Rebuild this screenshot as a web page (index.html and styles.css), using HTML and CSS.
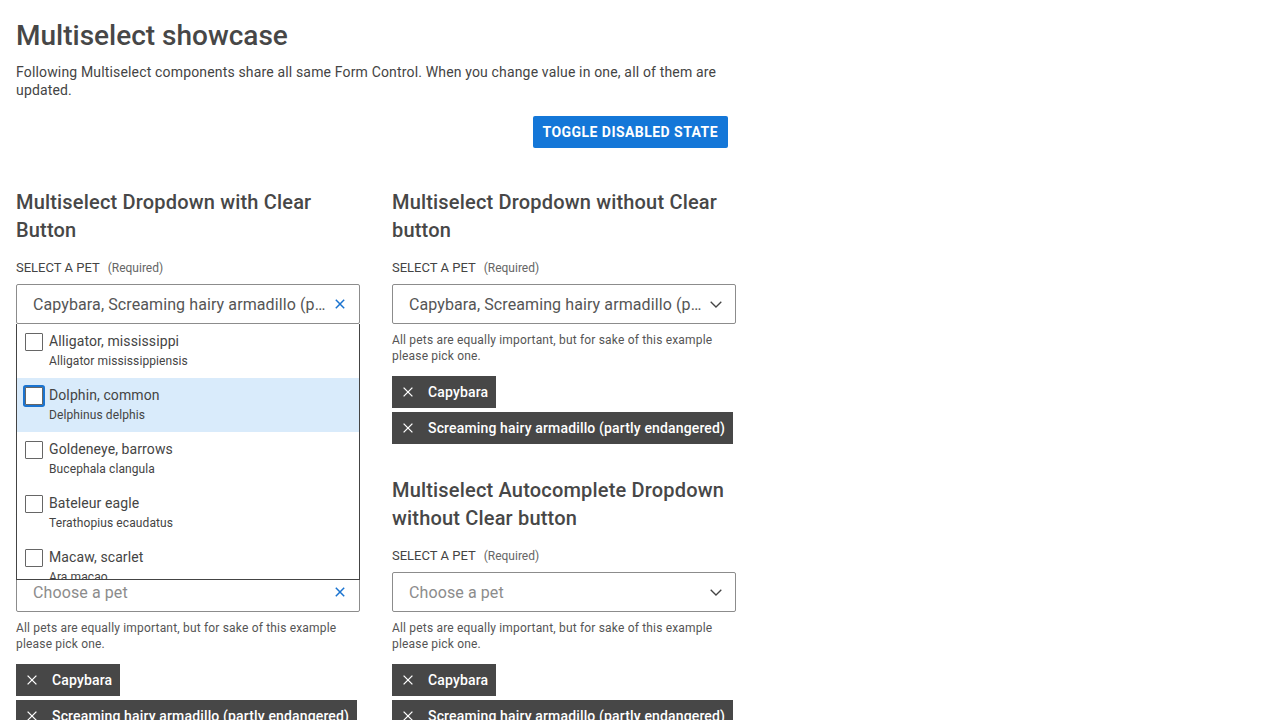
FILE: index.html
```html
<!DOCTYPE html>
<html lang="en">
<head>
<meta charset="utf-8">
<title>Multiselect showcase</title>
<link rel="stylesheet" href="styles.css">
</head>
<body>
<div class="page">
  <h1 class="title">Multiselect showcase</h1>
  <p class="intro">Following Multiselect components share all same Form Control. When you change value in one, all of them are updated.</p>
  <div class="actions"><button class="btn-primary">Toggle disabled state</button></div>

  <div class="columns">
    <div class="column">
      <section class="demo">
        <h2 class="demo-title">Multiselect Dropdown with Clear Button</h2>
        <div class="label">Select a pet <span class="req">(Required)</span></div>
        <div class="field-wrap">
          <div class="field">
            <span class="value">Capybara, Screaming hairy armadillo (partly endangered)</span>
            <span class="icon-clear"><svg width="10" height="10" viewBox="0 0 10 10"><path d="M0.8 0.8L9.2 9.2M9.2 0.8L0.8 9.2" stroke="#1a73d0" stroke-width="1.5" fill="none"/></svg></span>
          </div>
          <ul class="listbox">
            <li class="option"><span class="check"></span><span class="opt-text"><span class="opt-title">Alligator, mississippi</span><span class="opt-sub">Alligator mississippiensis</span></span></li>
            <li class="option active"><span class="check focus"></span><span class="opt-text"><span class="opt-title">Dolphin, common</span><span class="opt-sub">Delphinus delphis</span></span></li>
            <li class="option"><span class="check"></span><span class="opt-text"><span class="opt-title">Goldeneye, barrows</span><span class="opt-sub">Bucephala clangula</span></span></li>
            <li class="option"><span class="check"></span><span class="opt-text"><span class="opt-title">Bateleur eagle</span><span class="opt-sub">Terathopius ecaudatus</span></span></li>
            <li class="option"><span class="check"></span><span class="opt-text"><span class="opt-title">Macaw, scarlet</span><span class="opt-sub">Ara macao</span></span></li>
          </ul>
        </div>
        <p class="help">All pets are equally important, but for sake of this example please pick one.</p>
        <div class="chips">
          <span class="chip"><svg width="10" height="10" viewBox="0 0 10 10"><path d="M0.6 0.6L9.4 9.4M9.4 0.6L0.6 9.4" stroke="#fff" stroke-width="1.3" fill="none"/></svg>Capybara</span>
          <span class="chip"><svg width="10" height="10" viewBox="0 0 10 10"><path d="M0.6 0.6L9.4 9.4M9.4 0.6L0.6 9.4" stroke="#fff" stroke-width="1.3" fill="none"/></svg>Screaming hairy armadillo (partly endangered)</span>
        </div>
      </section>
      <section class="demo">
        <h2 class="demo-title">Multiselect Autocomplete Dropdown with Clear button</h2>
        <div class="label">Select a pet <span class="req">(Required)</span></div>
        <div class="field">
          <span class="value placeholder">Choose a pet</span>
          <span class="icon-clear"><svg width="10" height="10" viewBox="0 0 10 10"><path d="M0.8 0.8L9.2 9.2M9.2 0.8L0.8 9.2" stroke="#1a73d0" stroke-width="1.5" fill="none"/></svg></span>
        </div>
        <p class="help">All pets are equally important, but for sake of this example please pick one.</p>
        <div class="chips">
          <span class="chip"><svg width="10" height="10" viewBox="0 0 10 10"><path d="M0.6 0.6L9.4 9.4M9.4 0.6L0.6 9.4" stroke="#fff" stroke-width="1.3" fill="none"/></svg>Capybara</span>
          <span class="chip"><svg width="10" height="10" viewBox="0 0 10 10"><path d="M0.6 0.6L9.4 9.4M9.4 0.6L0.6 9.4" stroke="#fff" stroke-width="1.3" fill="none"/></svg>Screaming hairy armadillo (partly endangered)</span>
        </div>
      </section>
    </div>

    <div class="column">
      <section class="demo">
        <h2 class="demo-title">Multiselect Dropdown without Clear button</h2>
        <div class="label">Select a pet <span class="req">(Required)</span></div>
        <div class="field">
          <span class="value">Capybara, Screaming hairy armadillo (partly endangered)</span>
          <span class="icon-chevron"><svg width="12" height="7" viewBox="0 0 12 7"><path d="M0.7 0.7L6 6L11.3 0.7" stroke="#444" stroke-width="1.3" fill="none"/></svg></span>
        </div>
        <p class="help">All pets are equally important, but for sake of this example please pick one.</p>
        <div class="chips">
          <span class="chip"><svg width="10" height="10" viewBox="0 0 10 10"><path d="M0.6 0.6L9.4 9.4M9.4 0.6L0.6 9.4" stroke="#fff" stroke-width="1.3" fill="none"/></svg>Capybara</span>
          <span class="chip"><svg width="10" height="10" viewBox="0 0 10 10"><path d="M0.6 0.6L9.4 9.4M9.4 0.6L0.6 9.4" stroke="#fff" stroke-width="1.3" fill="none"/></svg>Screaming hairy armadillo (partly endangered)</span>
        </div>
      </section>
      <section class="demo">
        <h2 class="demo-title">Multiselect Autocomplete Dropdown without Clear button</h2>
        <div class="label">Select a pet <span class="req">(Required)</span></div>
        <div class="field">
          <span class="value placeholder">Choose a pet</span>
          <span class="icon-chevron"><svg width="12" height="7" viewBox="0 0 12 7"><path d="M0.7 0.7L6 6L11.3 0.7" stroke="#444" stroke-width="1.3" fill="none"/></svg></span>
        </div>
        <p class="help">All pets are equally important, but for sake of this example please pick one.</p>
        <div class="chips">
          <span class="chip"><svg width="10" height="10" viewBox="0 0 10 10"><path d="M0.6 0.6L9.4 9.4M9.4 0.6L0.6 9.4" stroke="#fff" stroke-width="1.3" fill="none"/></svg>Capybara</span>
          <span class="chip"><svg width="10" height="10" viewBox="0 0 10 10"><path d="M0.6 0.6L9.4 9.4M9.4 0.6L0.6 9.4" stroke="#fff" stroke-width="1.3" fill="none"/></svg>Screaming hairy armadillo (partly endangered)</span>
        </div>
      </section>
    </div>
  </div>
</div>
</body>
</html>
```

FILE: styles.css
```css
* { box-sizing: border-box; }
html, body { margin: 0; padding: 0; background: #fff; }
body {
  font-family: Roboto, "Liberation Sans", sans-serif;
  color: #444;
  overflow: hidden;
}
.page {
  width: 752px;
  padding: 17px 16px 0 16px;
}
.title {
  margin: 0;
  font-size: 28px;
  line-height: 38px;
  font-weight: 500;
  color: #474747;
}
.intro {
  margin: 8px 0 0 0;
  font-size: 14px;
  line-height: 18px;
  letter-spacing: 0.16px;
  color: #444;
}
.actions {
  display: flex;
  justify-content: flex-end;
  margin-top: 17px;
  padding-right: 8px;
}
.btn-primary {
  height: 32px;
  padding: 0 10px;
  border: 0;
  border-radius: 2px;
  background: #1477d8;
  color: #fff;
  font-family: inherit;
  font-size: 14px;
  font-weight: 700;
  letter-spacing: 0.45px;
  text-transform: uppercase;
}
.columns {
  display: grid;
  grid-template-columns: 344px 344px;
  column-gap: 32px;
  margin-top: 40px;
}
.demo + .demo { margin-top: 32px; }
.demo-title {
  margin: 0;
  font-size: 20px;
  line-height: 28px;
  font-weight: 500;
  letter-spacing: 0.18px;
  color: #474747;
}
.label {
  margin-top: 16px;
  font-size: 13px;
  line-height: 16px;
  text-transform: uppercase;
  color: #444;
}
.req {
  margin-left: 5px;
  font-size: 12px;
  text-transform: none;
  color: #666;
}
.field-wrap { position: relative; margin-top: 8px; }
.label + .field { margin-top: 8px; }
.field {
  display: flex;
  align-items: center;
  height: 40px;
  padding: 0 13px 0 16px;
  border: 1px solid #8c8c8c;
  border-radius: 2px;
  background: #fff;
}
.value {
  flex: 1;
  min-width: 0;
  overflow: hidden;
  white-space: nowrap;
  text-overflow: ellipsis;
  font-size: 16px;
  letter-spacing: 0.1px;
  color: #555;
}
.placeholder { color: #8c8c8c; }
.icon-clear, .icon-chevron {
  display: flex;
  margin-left: 8px;
}
.icon-clear { margin-right: 1px; }
.help {
  margin: 8px 0 0 0;
  font-size: 12px;
  line-height: 16px;
  letter-spacing: 0.18px;
  color: #555;
}
.chips {
  display: flex;
  flex-direction: column;
  align-items: flex-start;
  gap: 4px;
  margin-top: 12px;
}
.chip {
  display: inline-flex;
  align-items: center;
  gap: 15px;
  height: 32px;
  padding: 0 8px 0 11px;
  background: #474747;
  color: #fff;
  font-size: 14px;
  font-weight: 500;
  letter-spacing: 0.15px;
  white-space: nowrap;
}
.listbox {
  position: absolute;
  top: 100%;
  left: 0;
  right: 0;
  z-index: 5;
  height: 256px;
  margin: 0;
  padding: 0;
  list-style: none;
  overflow: hidden;
  background: #fff;
  border: 1px solid #444;
  border-top: 0;
}
.option {
  display: flex;
  align-items: flex-start;
  gap: 6px;
  height: 54px;
  padding: 8px 8px 0 8px;
}
.option.active { background: #d9ebfb; }
.check {
  flex: none;
  width: 18px;
  height: 18px;
  margin-top: 1px;
  border: 1px solid #666;
  border-radius: 1px;
  background: #fff;
}
.check.focus { box-shadow: 0 0 0 2px #1a73d0; }
.opt-text { display: flex; flex-direction: column; }
.opt-title { font-size: 14px; line-height: 18px; letter-spacing: 0.1px; color: #444; }
.opt-sub { margin-top: 3px; font-size: 12px; line-height: 16px; letter-spacing: 0.1px; color: #444; }
```
